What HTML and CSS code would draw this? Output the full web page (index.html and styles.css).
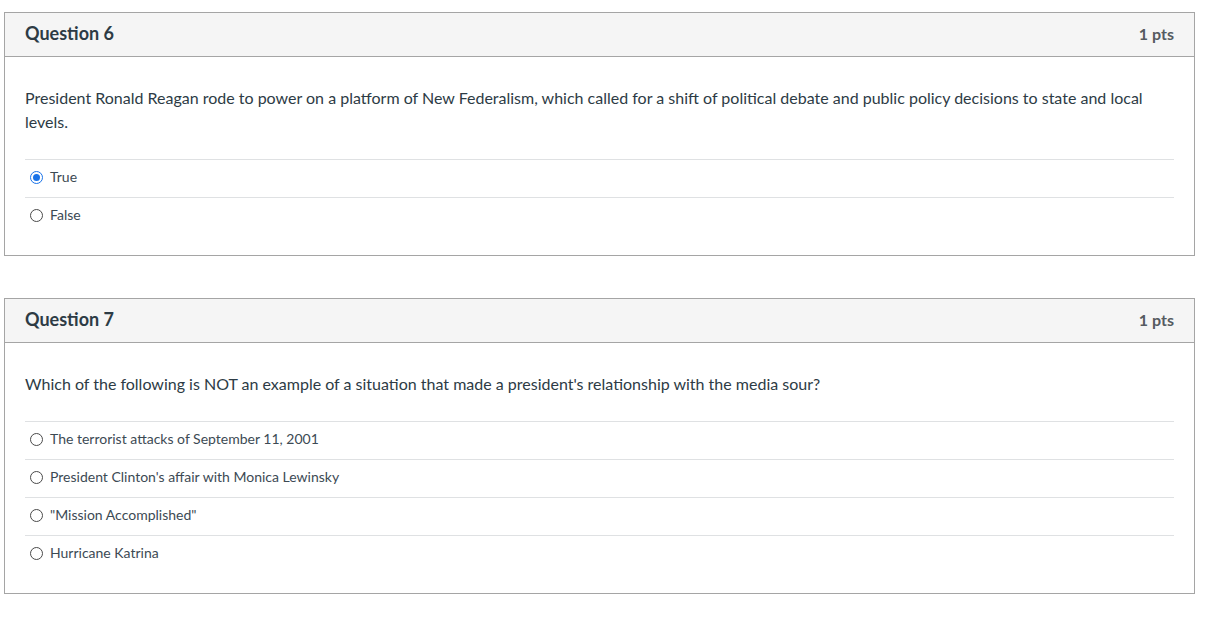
FILE: index.html
```html
<!DOCTYPE html>
<html>
<head>
<meta charset="utf-8">
<link rel="stylesheet" href="styles.css">
</head>
<body>
<div class="question">
  <div class="q-header">
    <span class="q-title">Question 6</span>
    <span class="q-pts">1 pts</span>
  </div>
  <div class="q-body">
    <p class="q-text">President Ronald Reagan rode to power on a platform of New Federalism, which called for a shift of political debate and public policy decisions to state and local levels.</p>
    <div class="answers">
      <div class="answer"><span class="radio checked"></span><span class="a-label">True</span></div>
      <div class="answer"><span class="radio"></span><span class="a-label">False</span></div>
    </div>
  </div>
</div>
<div class="question">
  <div class="q-header">
    <span class="q-title">Question 7</span>
    <span class="q-pts">1 pts</span>
  </div>
  <div class="q-body">
    <p class="q-text">Which of the following is NOT an example of a situation that made a president's relationship with the media sour?</p>
    <div class="answers">
      <div class="answer"><span class="radio"></span><span class="a-label">The terrorist attacks of September 11, 2001</span></div>
      <div class="answer"><span class="radio"></span><span class="a-label">President Clinton's affair with Monica Lewinsky</span></div>
      <div class="answer"><span class="radio"></span><span class="a-label">"Mission Accomplished"</span></div>
      <div class="answer"><span class="radio"></span><span class="a-label">Hurricane Katrina</span></div>
    </div>
  </div>
</div>
</body>
</html>
```
FILE: styles.css
```css
html, body {
  margin: 0;
  padding: 0;
  background: #ffffff;
}
body {
  padding: 12px 16px 0 4px;
  font-family: Lato, "Liberation Sans", sans-serif;
  color: #2d3b45;
}
.question {
  width: 1191px;
  box-sizing: border-box;
  border: 1px solid #a5a5a5;
  margin-bottom: 42px;
}
.q-header {
  height: 44px;
  box-sizing: border-box;
  background: #f5f5f5;
  border-bottom: 1px solid #a5a5a5;
  display: flex;
  align-items: center;
  justify-content: space-between;
  padding: 0 20px 4px 20px;
}
.q-title {
  font-size: 18px;
  font-weight: 700;
  color: #2d3b45;
}
.q-pts {
  font-size: 16px;
  font-weight: 700;
  color: #555b61;
  padding-top: 1px;
}
.q-body {
  padding: 29px 20px 20px 20px;
}
.q-text {
  margin: 0 0 25px 0;
  font-size: 16px;
  line-height: 24px;
  color: #2d3b45;
}
.answer {
  height: 38px;
  box-sizing: border-box;
  border-top: 1px solid #dfe1e3;
  display: flex;
  align-items: center;
  padding-left: 5px;
  padding-bottom: 5px;
}
.radio {
  width: 13px;
  height: 13px;
  box-sizing: border-box;
  border: 1px solid #4a4a4a;
  border-radius: 50%;
  margin-right: 7px;
  margin-top: 2px;
  position: relative;
  flex: none;
}
.radio.checked {
  border: 1px solid #1a73e8;
}
.radio.checked::after {
  content: "";
  position: absolute;
  left: 2px;
  top: 2px;
  width: 7px;
  height: 7px;
  border-radius: 50%;
  background: #1a73e8;
}
.a-label {
  font-size: 14px;
  color: #3c4a54;
}
```
